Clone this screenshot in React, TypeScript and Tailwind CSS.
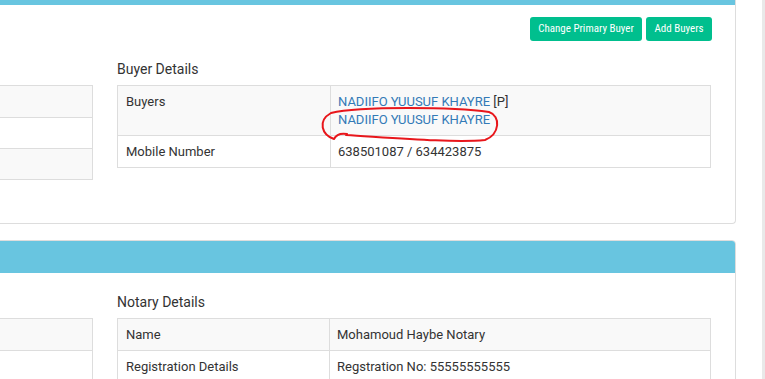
import React from 'react';

type Row = { label: string; value: React.ReactNode };

const DetailTable: React.FC<{ rows: Row[]; labelWidth: string }> = ({ rows, labelWidth }) => (
  <div className="border border-[#ddd]">
    {rows.map((r, i) => (
      <div
        key={i}
        className={`flex ${i > 0 ? 'border-t border-[#ddd]' : ''} ${i % 2 === 0 ? 'bg-[#f9f9f9]' : 'bg-white'}`}
      >
        <div className={`${labelWidth} shrink-0 border-r border-[#ddd] px-[8px] pt-[7px] pb-[6px] leading-[18px]`}>
          {r.label}
        </div>
        <div className="flex-1 px-[7px] pt-[7px] pb-[6px] leading-[18px]">{r.value}</div>
      </div>
    ))}
  </div>
);

// empty striped table peeking in from the left column
const GhostTable: React.FC<{ count: number }> = ({ count }) => (
  <div className="border border-[#ddd]">
    {[...Array(count)].map((_, i) => (
      <div
        key={i}
        className={`h-[31px] ${i > 0 ? 'border-t border-[#ddd]' : ''} ${i % 2 === 0 ? 'bg-[#f9f9f9]' : 'bg-white'}`}
      />
    ))}
  </div>
);

const SectionTitle: React.FC<{ children?: React.ReactNode }> = ({ children }) => (
  <div className="h-[20px] leading-[20px] text-[14px] mb-[6px]">{children}</div>
);

export default function App() {
  const buyers: Row[] = [
    {
      label: 'Buyers',
      value: (
        <>
          <div>
            <a className="text-[#337ab7]">NADIIFO YUUSUF KHAYRE</a> [P]
          </div>
          <div>
            <a className="text-[#337ab7]">NADIIFO YUUSUF KHAYRE</a>
          </div>
        </>
      ),
    },
    { label: 'Mobile Number', value: '638501087 / 634423875' },
  ];

  const notary: Row[] = [
    { label: 'Name', value: 'Mohamoud Haybe Notary' },
    { label: 'Registration Details', value: 'Regstration No: 55555555555' },
  ];

  return (
    <div className="relative w-[765px] h-[379px] overflow-hidden bg-white font-['Roboto',sans-serif] text-[13px] text-[#333]">
      <div className="flex h-full">
        <div className="flex-1 min-w-0 overflow-hidden">
          <div className="-ml-[232px] w-[968px] flex flex-col">
            {/* sale card */}
            <div className="border border-t-0 border-[#ddd] rounded-b-[4px] bg-white">
              <div className="h-[5px] bg-[#68c5e0]" />
              <div className="px-[24px] pt-[12px] pb-[43px]">
                <div className="flex justify-end gap-[4px] -mr-px">
                  <button className="w-[112px] h-[24px] rounded-[3px] bg-[#00bf8e] text-white text-[11px] font-['Roboto_Condensed','Liberation_Sans_Narrow',sans-serif]">
                    Change Primary Buyer
                  </button>
                  <button className="w-[66px] h-[24px] rounded-[3px] bg-[#00bf8e] text-white text-[11px] font-['Roboto_Condensed','Liberation_Sans_Narrow',sans-serif]">
                    Add Buyers
                  </button>
                </div>
                <div className="mt-[18px] grid grid-cols-[300px_594px] gap-x-[24px] items-start">
                  <div>
                    <SectionTitle />
                    <GhostTable count={3} />
                  </div>
                  <div>
                    <SectionTitle>Buyer Details</SectionTitle>
                    <DetailTable rows={buyers} labelWidth="w-[213px]" />
                  </div>
                </div>
              </div>
            </div>

            {/* notary card */}
            <div className="mt-[16px] border border-[#ddd] rounded-t-[4px] bg-white">
              <div className="h-[32px] bg-[#68c5e0] rounded-t-[3px]" />
              <div className="px-[24px] pt-[19px] pb-[20px]">
                <div className="grid grid-cols-[300px_594px] gap-x-[24px] items-start">
                  <div>
                    <SectionTitle />
                    <GhostTable count={3} />
                  </div>
                  <div>
                    <SectionTitle>Notary Details</SectionTitle>
                    <DetailTable rows={notary} labelWidth="w-[212px]" />
                  </div>
                </div>
              </div>
            </div>
          </div>
        </div>
        <div className="w-[3px] shrink-0 bg-[#e9e9e9]" />
      </div>

      {/* hand-drawn red mark around the second buyer */}
      <svg className="absolute inset-0 pointer-events-none" width="765" height="379" viewBox="0 0 765 379" fill="none">
        <path
          d="M347 134 C341 133 336 135 334 139 C322 135 317 121 331 113 C360 106 455 107 489 112 C501 116 500 134 485 140 C455 143 395 138 346 135"
          stroke="#e8161b"
          strokeWidth="2"
          strokeLinecap="round"
          strokeLinejoin="round"
        />
      </svg>
    </div>
  );
}
